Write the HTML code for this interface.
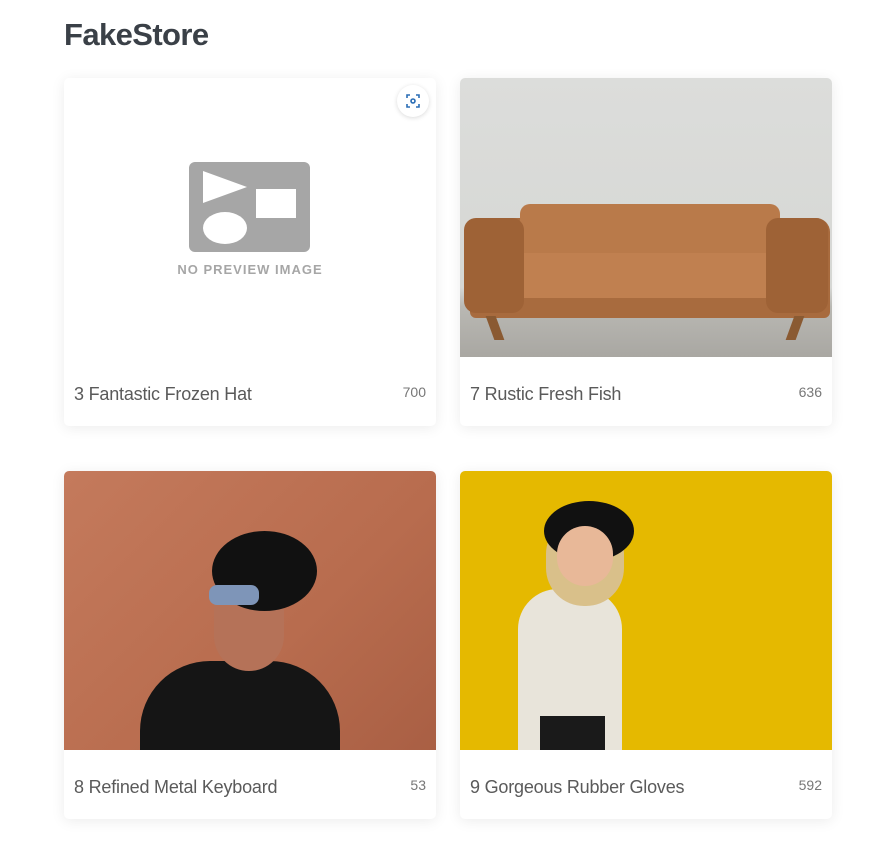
<!DOCTYPE html>
<html><head><meta charset="utf-8"><style>
body{margin:0;background:#fff;font-family:"Liberation Sans",sans-serif;width:896px;height:863px;overflow:hidden;position:relative}
h1{position:absolute;left:64px;top:17px;margin:0;font-size:31px;font-weight:bold;color:#3a4047;letter-spacing:-0.6px}
.card{position:absolute;width:372px;height:348px;background:#fff;border-radius:5px;box-shadow:0 2px 14px rgba(0,0,0,0.08);overflow:hidden}
.img{position:absolute;left:0;top:0;width:372px;height:279px;overflow:hidden}
.t{position:absolute;left:10px;top:306px;font-size:18px;color:#5a5a5a;letter-spacing:-0.2px}
.p{position:absolute;right:10px;top:306px;font-size:14px;color:#777}
</style></head><body>
<h1>FakeStore</h1>

<div class="card" style="left:64px;top:78px">
 <div class="img">
  <div style="position:absolute;left:333px;top:7px;width:32px;height:32px;border-radius:50%;background:#fff;box-shadow:0 1px 5px rgba(0,0,0,.15)">
   <svg width="32" height="32" viewBox="0 0 32 32" fill="none" stroke="#2a6db5" stroke-width="1.6"><path d="M10 13v-3h3M19 10h3v3M22 19v3h-3M13 22h-3v-3"/><circle cx="16" cy="16" r="2"/></svg>
  </div>
  <div style="position:absolute;left:125px;top:84px;width:121px;height:90px;background:#a6a6a6;border-radius:6px">
   <svg width="121" height="90" style="position:absolute;left:0;top:0"><polygon points="14,9 14,41 58,25" fill="#fff"/><rect x="67" y="27" width="40" height="29" fill="#fff"/><ellipse cx="36" cy="66" rx="22" ry="16" fill="#fff"/></svg>
  </div>
  <div style="position:absolute;left:86px;top:184px;width:200px;text-align:center;font-size:13px;font-weight:bold;color:#a6a6a6;letter-spacing:1px">NO PREVIEW IMAGE</div>
 </div>
 <div class="t">3 Fantastic Frozen Hat</div><div class="p">700</div>
</div>

<div class="card" style="left:460px;top:78px">
 <div class="img" style="background:linear-gradient(#dcdddb 0%,#d6d7d4 75%,#b9b8b3 82%,#a9a7a2 100%)">
  <div style="position:absolute;left:10px;top:140px;width:360px;height:100px;background:#a86b3e;border-radius:14px 14px 6px 6px"></div>
  <div style="position:absolute;left:60px;top:126px;width:260px;height:60px;background:#b97a4a;border-radius:10px"></div>
  <div style="position:absolute;left:30px;top:175px;width:330px;height:45px;background:#c08050;border-radius:8px"></div>
  <div style="position:absolute;left:4px;top:140px;width:60px;height:95px;background:#9e6236;border-radius:12px"></div>
  <div style="position:absolute;left:306px;top:140px;width:62px;height:95px;background:#9e6236;border-radius:12px"></div>
  <div style="position:absolute;left:30px;top:238px;width:10px;height:24px;background:#8a5a32;transform:skewX(20deg)"></div>
  <div style="position:absolute;left:330px;top:238px;width:10px;height:24px;background:#8a5a32;transform:skewX(-20deg)"></div>
 </div>
 <div class="t">7 Rustic Fresh Fish</div><div class="p">636</div>
</div>

<div class="card" style="left:64px;top:471px">
 <div class="img" style="background:linear-gradient(135deg,#c47a5c,#b86c4e 60%,#a95f44)">
  <div style="position:absolute;left:76px;top:190px;width:200px;height:120px;background:#151515;border-radius:70px 70px 0 0"></div>
  <div style="position:absolute;left:150px;top:80px;width:70px;height:120px;background:#b57258;border-radius:35px"></div>
  <div style="position:absolute;left:148px;top:60px;width:105px;height:80px;background:#111;border-radius:50%"></div>
  <div style="position:absolute;left:145px;top:114px;width:50px;height:20px;background:#7e95b8;border-radius:8px"></div>
 </div>
 <div class="t">8 Refined Metal Keyboard</div><div class="p">53</div>
</div>

<div class="card" style="left:460px;top:471px">
 <div class="img" style="background:#e5b900">
  <div style="position:absolute;left:58px;top:118px;width:104px;height:170px;background:#e8e4da;border-radius:40px 40px 0 0"></div>
  <div style="position:absolute;left:80px;top:245px;width:65px;height:40px;background:#1a1a1a"></div>
  <div style="position:absolute;left:86px;top:45px;width:78px;height:90px;background:#d9c08a;border-radius:38px"></div>
  <div style="position:absolute;left:84px;top:30px;width:90px;height:60px;background:#111;border-radius:50%"></div>
  <div style="position:absolute;left:97px;top:55px;width:56px;height:60px;background:#e8b898;border-radius:28px"></div>
 </div>
 <div class="t">9 Gorgeous Rubber Gloves</div><div class="p">592</div>
</div>
</body></html>
